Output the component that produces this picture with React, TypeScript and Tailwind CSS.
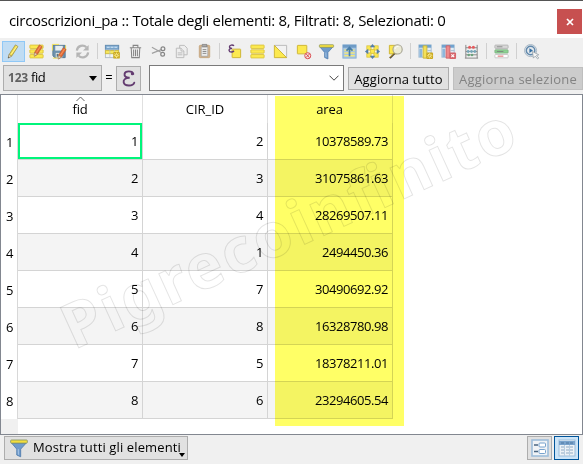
import type { ReactNode } from 'react';

const rows = [
  [1, 2, '10378589.73'],
  [2, 3, '31075861.63'],
  [3, 4, '28269507.11'],
  [4, 1, '2494450.36'],
  [5, 7, '30490692.92'],
  [6, 8, '16328780.98'],
  [7, 5, '18378211.01'],
  [8, 6, '23294605.54'],
];

function Icon({ children, size = 18 }: { children: ReactNode; size?: number }) {
  return (
    <svg width={size} height={size} viewBox="0 0 18 18" fill="none" className="shrink-0">
      {children}
    </svg>
  );
}

function Tool({ children, active = false }: { children: ReactNode; active?: boolean }) {
  return (
    <button
      className={`flex h-[21px] w-[23px] shrink-0 items-center justify-center border ${
        active ? 'border-[#90c8f6] bg-[#c0dcf3]' : 'border-transparent'
      }`}
    >
      <Icon size={17}>{children}</Icon>
    </button>
  );
}

function Separator() {
  return (
    <div className="flex w-[7px] shrink-0 justify-center">
      <div className="h-4 w-px bg-[#d0d0d0]" />
    </div>
  );
}

const Pencil = () => (
  <>
    <path d="M4.500 12 11 2l2.700 1.700-6.500 10-3.700 2z" fill="#f2dd45" stroke="#9b8d45" strokeWidth=".8" />
    <path d="M6.5 12 12.5 3.5" stroke="#fff3a0" />
    <path d="m4.300 12-.9 4 3.500-2z" fill="#ead9b5" stroke="#8a8063" strokeWidth=".6" />
    <path d="m3.200 16 .4-1.6 1.2.9z" fill="#555" />
  </>
);

const RedPencil = ({ x = 0, y = 0 }: { x?: number; y?: number }) => (
  <g transform={`translate(${x} ${y})`}>
    <path d="m7 11 5-8 3 2-5 8-3 2z" fill="#e86b35" stroke="#b45632" strokeWidth=".7" />
    <path d="m9 11 4.6-7" stroke="#f49a62" />
    <path d="m7 11-.6 4 3.3-2z" fill="#eadbc0" stroke="#947f5c" strokeWidth=".5" />
  </g>
);

const Bars = () => (
  <g fill="#fce94f" stroke="#d8c03c" strokeWidth=".9">
    <rect x="2" y="2.200" width="14" height="3.600" rx=".5" />
    <rect x="2" y="7.200" width="14" height="3.600" rx=".5" />
    <rect x="2" y="12.200" width="14" height="3.600" rx=".5" />
  </g>
);

const Star = ({ x, y }: { x: number; y: number }) => (
  <g transform={`translate(${x} ${y})`}>
    <rect x="-3.5" y="-3.5" width="7" height="7" rx="1" fill="#c9a81e" />
    <path d="M0-2.8V2.8M-2.8 0h5.6M-2-2l4 4M2-2l-4 4" stroke="#fff19a" strokeWidth=".9" />
    <circle r=".8" fill="#c9a81e" />
  </g>
);

const Funnel = () => (
  <>
    <path d="M2.3 4.5 7 10v5.3l3.5 1.6V10l5-5.5z" fill="#6f9bcb" stroke="#4f7cad" strokeWidth=".8" />
    <path d="m8.3 10 .2 5" stroke="#a5c3e4" />
    <rect x="1.5" y="1.8" width="15" height="2.8" rx=".7" fill="#f4df3c" stroke="#8d9862" strokeWidth=".8" />
  </>
);

const Epsilon = () => (
  <svg width="23" height="23" viewBox="0 0 24 24" fill="none" className="shrink-0">
    <path
      d="M17 7.200C16.300 3.800 8.600 3.500 7.900 7.200c-.5 2.700 1.900 4.200 5.300 4-4.500-.1-6.900 2.300-6.200 5 1 4 9.600 4.100 11 .2"
      stroke="#633b70"
      strokeWidth="2"
      strokeLinecap="round"
    />
    <circle cx="16" cy="7" r="1.6" fill="#633b70" />
  </svg>
);

function Toolbar() {
  return (
    <div className="flex h-[26px] items-center bg-[#f0f0f0] pl-[2px]">
      <Tool active><Pencil /></Tool>
      <Tool><Bars /><RedPencil y={-1} /></Tool>
      <Tool>
        <path d="M2 2.5h13v13H4l-2-2z" fill="#6e91ad" stroke="#567994" />
        <path d="M4.5 3h8v5h-8z" fill="#e7edf0" />
        <path d="M5 10.5h7v5H5z" fill="#e5e5de" />
        <path d="M6 11.5h2v3H6z" fill="#557387" />
        <path d="M1.5 8V1.5h7m7 1v6M2 16h5" stroke="#f1df51" />
        <RedPencil x={1} y={2} />
      </Tool>
      <Tool>
        <g stroke="#b5b5b5" strokeWidth="2.3">
          <path d="M3 8c.5-5 7-7 10-3.500" />
          <path d="M15 10c-.5 5-7 7-10 3.500" />
        </g>
        <path d="M15.5 2v6h-6zM2.5 16v-6h6z" fill="#b5b5b5" />
      </Tool>
      <Separator />
      <Tool>
        <rect x="1.5" y="2.5" width="14" height="13" fill="#eff3f6" stroke="#b2bdc7" />
        <rect x="1.5" y="2.5" width="14" height="4" fill="#82aed5" stroke="#668fb3" />
        <path d="M3 4.5h11" stroke="#d8e9f7" strokeDasharray="3 1" />
        <rect x="1.5" y="8" width="14" height="3.3" fill="#f6e75c" stroke="#cebb44" />
        <path d="M6.2 7v8M11 7v8" stroke="#b6bfc8" strokeWidth=".7" />
        <Star x={13.3} y={13} />
      </Tool>
      <Tool>
        <path d="M3 5h12M6.5 4.5v-2h5v2M4.5 5.5l.5 10h8l.5-10M7 7v7m2-7v7m2-7v7" stroke="#858585" strokeWidth="1.1" />
      </Tool>
      <Tool>
        <path d="M2 4.5 12 10M2 11l10-4" stroke="#a1a1a1" strokeWidth="1.2" />
        <circle cx="13.7" cy="6" r="2" stroke="#868686" strokeWidth="1.3" />
        <circle cx="13.4" cy="12" r="2" stroke="#868686" strokeWidth="1.3" />
      </Tool>
      <Tool>
        <g fill="#eee" stroke="#bababa">
          <path d="M7 2.5h5l3 3v7H7z" />
          <path d="M3.5 5.5h5l3 3v7h-8z" />
          <path d="M8.5 5.5v3h3M5 10.5h5m-5 2h5" />
        </g>
      </Tool>
      <Tool>
        <rect x="3.5" y="2.5" width="11" height="13" rx="1" fill="#d5b58e" stroke="#c6a780" />
        <path d="M5.5 4h7v10h-7z" fill="#eceded" stroke="#999" strokeWidth=".7" />
        <path d="M6.5 3V1.5h5V4h-5" fill="#aaa" stroke="#777" strokeWidth=".7" />
        <path d="M7 7h4M7 9h4m-4 2h4" stroke="#888" />
      </Tool>
      <Separator />
      <Tool>
        <rect x="6.5" y="6.5" width="9" height="9" rx=".5" fill="#fce94f" stroke="#cdb534" />
        <path d="M8.5 3C7 1.7 3.8 2 3.7 4c0 1.2 1 1.7 2.8 1.7-2.3 0-3.5.9-3.2 2.3.5 2 4 1.9 5.1.2" stroke="#633b70" strokeWidth="1.5" />
      </Tool>
      <Tool><Bars /></Tool>
      <Tool>
        <path d="M2.5 2.5h13v13z" fill="#f2f2f2" stroke="#b8b8b8" />
        <path d="M2.5 2.5v13h13z" fill="#fce94f" stroke="#cdb534" />
      </Tool>
      <Tool>
        <rect x="2.5" y="2.5" width="10" height="9" rx=".5" fill="#fce94f" stroke="#cdb534" />
        <circle cx="13.5" cy="13.5" r="3.2" fill="#f4e6e6" stroke="#d9494c" />
        <path d="m11.5 15.5 4-4m-3.7 0 3.4 4" stroke="#d9494c" />
      </Tool>
      <Tool><Funnel /></Tool>
      <Tool>
        <rect x="2" y="2" width="14" height="14" fill="#a9c7e1" stroke="#89b0d4" />
        <rect x="2" y="2" width="14" height="3" fill="#6e9bc6" />
        <path d="M3.5 7.5h11m-11 3h11m-11 3h11" stroke="#f4e879" strokeWidth="1.5" />
        <path d="M9 14V5M5.800 8 9 4.800 12.200 8" stroke="#477da9" strokeWidth="1.800" />
      </Tool>
      <Tool>
        <g fill="#fce94f" stroke="#d8c03c" strokeWidth=".8">
          <rect x="3" y="3" width="4.500" height="4.500" />
          <rect x="10.5" y="3" width="4.500" height="4.500" />
          <rect x="6.800" y="6.800" width="4.400" height="4.400" />
          <rect x="3" y="10.500" width="4.500" height="4.500" />
          <rect x="10.5" y="10.500" width="4.500" height="4.500" />
        </g>
        <path d="m9 1 3 3.5H6zM9 17l3-3.5H6zM1 9l3.5-3v6zM17 9l-3.5-3v6z" fill="#557fa9" />
      </Tool>
      <Tool>
        <path d="M2.5 2.5h8v9h-8z" fill="#fce94f" stroke="#cdb534" />
        <path d="m3 16 5-5" stroke="#564d42" strokeWidth="2.2" />
        <path d="m3 15.2 4.5-4.5" stroke="#d7b728" />
        <circle cx="11.2" cy="6.8" r="4.9" fill="#ecebd5" stroke="#a6a494" strokeWidth="1.2" />
        <path d="M8.5 6.2c.5-2 2.1-2.7 3.6-2.5" stroke="#fff" />
      </Tool>
      <Separator />
      <Tool>
        <rect x="2" y="2" width="13" height="13" fill="#e2edf5" stroke="#a7bfd3" />
        <path d="M2 3.5h13" stroke="#71a3cf" strokeWidth="3" />
        <path d="M2.5 6h3v9h-3z" fill="#8eb7db" />
        <path d="M6.5 3h4v13h-4z" fill="#f4e158" stroke="#c9b440" />
        <path d="M11 8h4M11 11h4" stroke="#abc0cf" />
        <Star x={13.5} y={13.5} />
      </Tool>
      <Tool>
        <rect x="2" y="2" width="13" height="13" fill="#e2edf5" stroke="#a7bfd3" />
        <path d="M2 3.5h13" stroke="#71a3cf" strokeWidth="3" />
        <path d="M2.5 6h3v9h-3z" fill="#8eb7db" />
        <path d="M6.5 3h4v13h-4z" fill="#ef888a" stroke="#cf6266" />
        <path d="M11 8h4M11 11h4" stroke="#abc0cf" />
        <rect x="10" y="10" width="7" height="7" rx="1" fill="#d6656a" />
        <path d="m12 12 3 3m0-3-3 3" stroke="#fff" strokeWidth="1.2" />
      </Tool>
      <Tool>
        <path d="M3 2v14m12-14v14M2 16h14M3 5h12M3 9h12M3 12.5h12" stroke="#858585" />
        <g fill="#e45a5d"><circle cx="7" cy="4.5" r="1.6" /><circle cx="11" cy="4.5" r="1.6" /></g>
        <g fill="#77a7ba"><circle cx="5.5" cy="9" r="1.5" /><circle cx="9" cy="9" r="1.5" /><circle cx="12.5" cy="9" r="1.5" /></g>
        <g fill="#6ca37d"><circle cx="6" cy="12.7" r="1.4" /><circle cx="9.5" cy="12.7" r="1.4" /></g>
      </Tool>
      <Separator />
      <Tool>
        <g strokeWidth=".8">
          <rect x="2" y="2.200" width="14" height="3.500" rx=".7" fill="#d8d8d8" stroke="#aaa" />
          <rect x="2" y="7.2" width="14" height="3.500" rx=".7" fill="#8bd391" stroke="#7eab81" />
          <rect x="2" y="12.2" width="14" height="3.500" rx=".7" fill="#fff" stroke="#bbb" />
          <path d="M4 4h6M4 9h7" stroke="#777" />
          <path d="M5 13.900h6" stroke="#d63338" />
        </g>
      </Tool>
      <Separator />
      <Tool>
        <circle cx="8" cy="8" r="6.400" fill="#e2e8ed" stroke="#a7b6c2" />
        <circle cx="8" cy="8" r="4.500" stroke="#6289ac" strokeWidth="1.5" />
        <path d="M6.800 5.500 10.5 8l-3.700 2.500z" fill="#316da1" />
        <path d="m10 9 1 7 2-2.1 2.5 3 1.2-1-2.5-2.7 2.5-.7z" fill="#f7f7f7" stroke="#909ba3" strokeWidth=".8" />
      </Tool>
    </div>
  );
}

function FilterBar() {
  return (
    <div className="flex h-[30px] items-start bg-[#f0f0f0] pl-[3px] pt-px text-[13px]">
      <button className="flex h-[26px] w-[99px] items-center border border-[#adadad] bg-[#e1e1e1] pl-[4px]">
        <span className="text-[12px] font-bold tracking-[-0.2px] text-[#606060]">123</span>
        <span className="ml-[3px] tracking-[-0.4px]">fid</span>
        <span className="ml-auto mr-[4px] h-0 w-0 border-x-4 border-t-[5px] border-x-transparent border-t-black" />
      </button>
      <span className="w-[14px] pt-[3px] text-center">=</span>
      <button className="mt-px flex h-[25px] w-[25px] items-center justify-center border border-[#adadad] bg-[#e1e1e1]">
        <Epsilon />
      </button>
      <div className="ml-2 flex h-[26px] w-[195px] items-center justify-end border border-[#7a7a7a] bg-white pr-[4px]">
        <svg width="10" height="6" viewBox="0 0 10 6" fill="none"><path d="m.5.7 4.500 4.500L9.500.7" stroke="#444" /></svg>
      </div>
      <button className="ml-1 mt-[2px] h-[23px] w-[101px] whitespace-nowrap border border-[#adadad] bg-[#e1e1e1] leading-[20px] tracking-[0.1px]">
        Aggiorna tutto
      </button>
      <button className="ml-1 mt-[2px] h-[23px] w-[130px] whitespace-nowrap border border-[#bfbfbf] bg-[#ccc] leading-[20px] tracking-[0.22px] text-[#838383]">
        Aggiorna selezione
      </button>
    </div>
  );
}

function AttributeTable() {
  return (
    <div className="relative h-[341px] overflow-hidden border border-[#828790] bg-white text-[13px]">
      <div className="flex h-[28px]">
        <div className="w-[17px] border-r border-[#e0e0e0]" />
        <div className="relative w-[125px] border-r border-[#e0e0e0] text-center leading-[29px] tracking-[-0.2px]">
          fid
          <svg className="absolute left-[58px] top-[1px]" width="9" height="6" viewBox="0 0 9 6" fill="none"><path d="m.5 5 4-4 4 4" stroke="#666" /></svg>
        </div>
        <div className="w-[125px] border-r border-[#e0e0e0] text-center leading-[28px]">CIR_ID</div>
        <div className="w-[125px] border-r border-[#e0e0e0] pr-[1px] text-center leading-[28px] tracking-[-0.1px]">area</div>
      </div>
      {rows.map(([fid, cir, area], i) => (
        <div key={fid} className="flex h-[37px] leading-[37px] tracking-[-0.43px]">
          <div className="w-[17px] border-r border-[#d8d8d8] pr-[4px] text-right leading-[39px]">{fid}</div>
          {[fid, cir, area].map((value, column) => (
            <div
              key={column}
              className={`relative w-[125px] border-b border-r border-[#d4d4d4] pr-[4px] text-right ${i % 2 ? 'bg-[#f4f4f4]' : 'bg-white'}`}
            >
              {value}
              {i === 0 && column === 0 && <div className="absolute inset-0 border-2 border-[#00f57b]" />}
            </div>
          ))}
        </div>
      ))}
      <div className="h-[15px] w-[17px] bg-[#f0f0f0]" />
      <div className="absolute left-[274px] top-[1px] h-[330px] w-[129px] bg-[#ffff66] mix-blend-multiply" />
      <svg className="pointer-events-none absolute -left-px -top-px" width="583" height="340">
        <text
          transform="translate(74 256) rotate(-24.6)"
          textLength="491"
          fontSize="62"
          fontWeight="700"
          fill="none"
          stroke="#000"
          strokeOpacity=".11"
          strokeWidth="1"
          className="font-['Noto_Sans',sans-serif]"
        >
          Pigrecoinfinito
        </text>
      </svg>
    </div>
  );
}

function StatusBar() {
  return (
    <div className="flex h-[29px] items-start bg-[#f0f0f0] pl-1 pr-1 pt-px">
      <button className="relative flex h-[24px] w-[184px] items-center border border-[#adadad] bg-[#e1e1e1] pl-[4px] text-[13px]">
        <Icon size={20}><Funnel /></Icon>
        <span className="ml-[4px] whitespace-nowrap tracking-[0.12px]">Mostra tutti gli elementi</span>
        <span className="absolute bottom-[2px] right-[2px] h-0 w-0 border-x-[3.5px] border-t-4 border-x-transparent border-t-black" />
      </button>
      <button className="ml-auto flex h-[24px] w-[25px] items-center justify-center border border-[#adadad] bg-[#e1e1e1]">
        <Icon>
          <rect x="1" y="1" width="16" height="16" fill="#f0f3f6" stroke="#9fbedb" strokeWidth="1.6" />
          <path d="M3 6h4m-4 6.5h4" stroke="#4a6681" strokeWidth="1.5" />
          <rect x="8" y="4" width="6.500" height="4" rx="1" fill="#fff" stroke="#77a2cd" />
          <rect x="8" y="10.5" width="6.500" height="4" rx="1" fill="#fff" stroke="#77a2cd" />
        </Icon>
      </button>
      <button className="ml-[2px] flex h-[24px] w-[25px] items-center justify-center border border-[#00559b] bg-[#cce4f7]">
        <Icon>
          <rect x="1" y="1" width="16" height="16" fill="#edf2f6" stroke="#9cbddb" />
          <rect x="1" y="2" width="16" height="4" fill="#79a3cc" />
          <path d="M3 4h3m2 0h7" stroke="#4e779f" strokeDasharray="3 1" />
          <path d="M3 8h3m2 0h3m1 0h3M3 11h3m2 0h3m1 0h3M3 14h3m2 0h3m1 0h3" stroke="#8faac3" strokeWidth="1.1" />
          <path d="M6.500 6v11m5-11v11" stroke="#b9cee0" />
        </Icon>
      </button>
    </div>
  );
}

export default function App() {
  return (
    <div className="h-[464px] w-[583px] overflow-hidden bg-white font-['Open_Sans','Noto_Sans',sans-serif] text-black">
      <header className="flex h-[38px] items-start border-t border-[#555] pl-[9px] pr-px">
        <h1 className="whitespace-nowrap pt-[8px] text-[15px] leading-[22px] tracking-[-0.32px]">
          circoscrizioni_pa :: Totale degli elementi: 8, Filtrati: 8, Selezionati: 0
        </h1>
        <button className="ml-auto mt-[8px] flex h-[25px] w-[25px] items-center justify-center bg-[#c75050]">
          <svg width="8" height="8" viewBox="0 0 8 8"><path d="m1 1 6 6m0-6L1 7" stroke="#fff" strokeWidth="1.7" /></svg>
        </button>
      </header>
      <Toolbar />
      <FilterBar />
      <AttributeTable />
      <StatusBar />
    </div>
  );
}
